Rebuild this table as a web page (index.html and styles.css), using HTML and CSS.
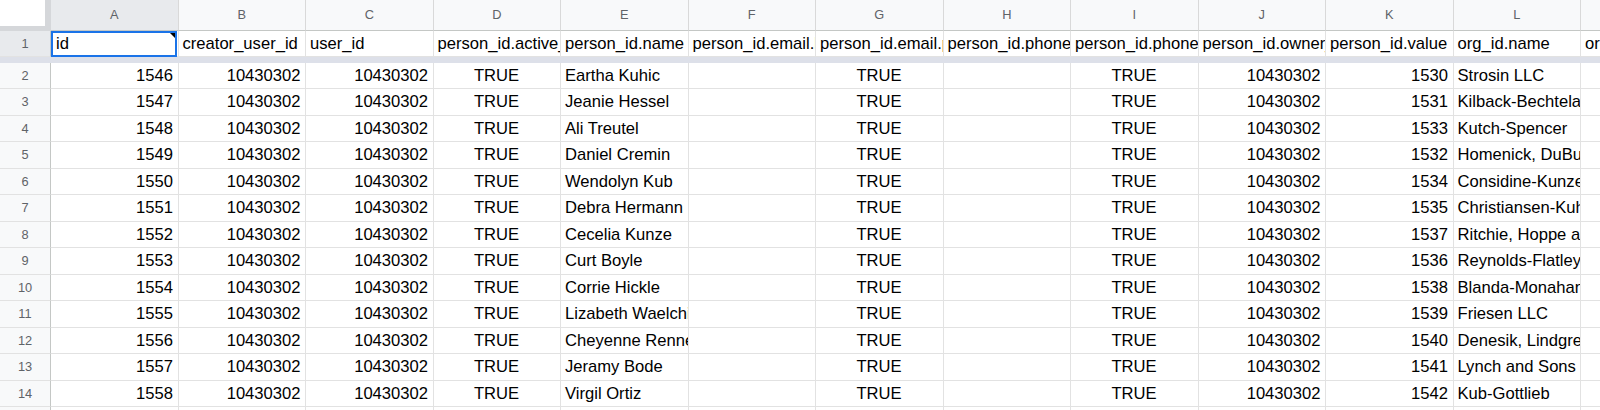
FILE: index.html
```html
<!DOCTYPE html>
<html>
<head>
<meta charset="utf-8">
<link rel="stylesheet" href="styles.css">
</head>
<body>
<div class="sheet">
  <div class="row head">
    <div class="corner"></div>
    <div class="ch sel">A</div><div class="ch">B</div><div class="ch">C</div><div class="ch">D</div><div class="ch">E</div><div class="ch">F</div><div class="ch">G</div><div class="ch">H</div><div class="ch">I</div><div class="ch">J</div><div class="ch">K</div><div class="ch">L</div><div class="ch"></div>
  </div>
  <div class="row">
    <div class="rh sel">1</div>
    <div class="c t active">id<span class="note"></span></div><div class="c t">creator_user_id</div><div class="c t">user_id</div><div class="c t">person_id.active_flag</div><div class="c t">person_id.name</div><div class="c t">person_id.email.label</div><div class="c t">person_id.email.primary</div><div class="c t">person_id.phone.label</div><div class="c t">person_id.phone.primary</div><div class="c t">person_id.owner_id</div><div class="c t">person_id.value</div><div class="c t">org_id.name</div><div class="c t">org_id.people_count</div>
  </div>
  <div class="freeze"></div>
  <div class="row">
    <div class="rh">2</div><div class="c n">1546</div><div class="c n">10430302</div><div class="c n">10430302</div><div class="c b">TRUE</div><div class="c t">Eartha Kuhic</div><div class="c"></div><div class="c b">TRUE</div><div class="c"></div><div class="c b">TRUE</div><div class="c n">10430302</div><div class="c n">1530</div><div class="c t">Strosin LLC</div><div class="c"></div>
  </div>
  <div class="row">
    <div class="rh">3</div><div class="c n">1547</div><div class="c n">10430302</div><div class="c n">10430302</div><div class="c b">TRUE</div><div class="c t">Jeanie Hessel</div><div class="c"></div><div class="c b">TRUE</div><div class="c"></div><div class="c b">TRUE</div><div class="c n">10430302</div><div class="c n">1531</div><div class="c t">Kilback-Bechtelar</div><div class="c"></div>
  </div>
  <div class="row">
    <div class="rh">4</div><div class="c n">1548</div><div class="c n">10430302</div><div class="c n">10430302</div><div class="c b">TRUE</div><div class="c t">Ali Treutel</div><div class="c"></div><div class="c b">TRUE</div><div class="c"></div><div class="c b">TRUE</div><div class="c n">10430302</div><div class="c n">1533</div><div class="c t">Kutch-Spencer</div><div class="c"></div>
  </div>
  <div class="row">
    <div class="rh">5</div><div class="c n">1549</div><div class="c n">10430302</div><div class="c n">10430302</div><div class="c b">TRUE</div><div class="c t">Daniel Cremin</div><div class="c"></div><div class="c b">TRUE</div><div class="c"></div><div class="c b">TRUE</div><div class="c n">10430302</div><div class="c n">1532</div><div class="c t">Homenick, DuBuque and Schmeler</div><div class="c"></div>
  </div>
  <div class="row">
    <div class="rh">6</div><div class="c n">1550</div><div class="c n">10430302</div><div class="c n">10430302</div><div class="c b">TRUE</div><div class="c t">Wendolyn Kub</div><div class="c"></div><div class="c b">TRUE</div><div class="c"></div><div class="c b">TRUE</div><div class="c n">10430302</div><div class="c n">1534</div><div class="c t">Considine-Kunze</div><div class="c"></div>
  </div>
  <div class="row">
    <div class="rh">7</div><div class="c n">1551</div><div class="c n">10430302</div><div class="c n">10430302</div><div class="c b">TRUE</div><div class="c t">Debra Hermann</div><div class="c"></div><div class="c b">TRUE</div><div class="c"></div><div class="c b">TRUE</div><div class="c n">10430302</div><div class="c n">1535</div><div class="c t">Christiansen-Kuhlman</div><div class="c"></div>
  </div>
  <div class="row">
    <div class="rh">8</div><div class="c n">1552</div><div class="c n">10430302</div><div class="c n">10430302</div><div class="c b">TRUE</div><div class="c t">Cecelia Kunze</div><div class="c"></div><div class="c b">TRUE</div><div class="c"></div><div class="c b">TRUE</div><div class="c n">10430302</div><div class="c n">1537</div><div class="c t">Ritchie, Hoppe and Kuhn</div><div class="c"></div>
  </div>
  <div class="row">
    <div class="rh">9</div><div class="c n">1553</div><div class="c n">10430302</div><div class="c n">10430302</div><div class="c b">TRUE</div><div class="c t">Curt Boyle</div><div class="c"></div><div class="c b">TRUE</div><div class="c"></div><div class="c b">TRUE</div><div class="c n">10430302</div><div class="c n">1536</div><div class="c t">Reynolds-Flatley</div><div class="c"></div>
  </div>
  <div class="row">
    <div class="rh">10</div><div class="c n">1554</div><div class="c n">10430302</div><div class="c n">10430302</div><div class="c b">TRUE</div><div class="c t">Corrie Hickle</div><div class="c"></div><div class="c b">TRUE</div><div class="c"></div><div class="c b">TRUE</div><div class="c n">10430302</div><div class="c n">1538</div><div class="c t">Blanda-Monahan</div><div class="c"></div>
  </div>
  <div class="row">
    <div class="rh">11</div><div class="c n">1555</div><div class="c n">10430302</div><div class="c n">10430302</div><div class="c b">TRUE</div><div class="c t">Lizabeth Waelchi</div><div class="c"></div><div class="c b">TRUE</div><div class="c"></div><div class="c b">TRUE</div><div class="c n">10430302</div><div class="c n">1539</div><div class="c t">Friesen LLC</div><div class="c"></div>
  </div>
  <div class="row">
    <div class="rh">12</div><div class="c n">1556</div><div class="c n">10430302</div><div class="c n">10430302</div><div class="c b">TRUE</div><div class="c t">Cheyenne Renner</div><div class="c"></div><div class="c b">TRUE</div><div class="c"></div><div class="c b">TRUE</div><div class="c n">10430302</div><div class="c n">1540</div><div class="c t">Denesik, Lindgren and Mraz</div><div class="c"></div>
  </div>
  <div class="row">
    <div class="rh">13</div><div class="c n">1557</div><div class="c n">10430302</div><div class="c n">10430302</div><div class="c b">TRUE</div><div class="c t">Jeramy Bode</div><div class="c"></div><div class="c b">TRUE</div><div class="c"></div><div class="c b">TRUE</div><div class="c n">10430302</div><div class="c n">1541</div><div class="c t">Lynch and Sons</div><div class="c"></div>
  </div>
  <div class="row">
    <div class="rh">14</div><div class="c n">1558</div><div class="c n">10430302</div><div class="c n">10430302</div><div class="c b">TRUE</div><div class="c t">Virgil Ortiz</div><div class="c"></div><div class="c b">TRUE</div><div class="c"></div><div class="c b">TRUE</div><div class="c n">10430302</div><div class="c n">1542</div><div class="c t">Kub-Gottlieb</div><div class="c"></div>
  </div>
  <div class="row">
    <div class="rh">15</div><div class="c"></div><div class="c"></div><div class="c"></div><div class="c"></div><div class="c"></div><div class="c"></div><div class="c"></div><div class="c"></div><div class="c"></div><div class="c"></div><div class="c"></div><div class="c"></div><div class="c"></div>
  </div>
</div>
</body>
</html>
```
FILE: styles.css
```css
html, body {
  margin: 0;
  padding: 0;
  background: #ffffff;
  overflow: hidden;
}
body {
  width: 1600px;
  height: 410px;
  font-family: "Liberation Sans", Arial, Helvetica, sans-serif;
  color: #000;
}
.sheet {
  width: 1800px;
}
.row {
  display: grid;
  grid-template-columns: 51px repeat(12, 127.5px) 200px;
  height: 26.5px;
}
.row.head {
  height: 30.5px;
}
.corner {
  background: #ffffff;
  border-right: 6px solid #d5d7da;
  border-bottom: 5px solid #d5d7da;
  box-sizing: border-box;
}
.ch {
  box-sizing: border-box;
  background: #f8f9fa;
  border-right: 1px solid #d9d9d9;
  border-bottom: 1px solid #c4c7c5;
  color: #5f6368;
  font-size: 12.8px;
  line-height: 29.5px;
  text-align: center;
}
.ch.sel, .rh.sel {
  background: #e8eaed;
}
.rh {
  box-sizing: border-box;
  background: #f8f9fa;
  border-right: 1px solid #c4c7c5;
  border-bottom: 1px solid #e2e2e2;
  color: #5f6368;
  font-size: 12.8px;
  line-height: 25.5px;
  text-align: center;
}
.c {
  box-sizing: border-box;
  position: relative;
  border-right: 1px solid #e2e2e2;
  border-bottom: 1px solid #e2e2e2;
  font-size: 16.6px;
  line-height: 25.5px;
  white-space: nowrap;
  overflow: hidden;
  padding: 0 4.5px 0 4px;
}
.n { text-align: right; }
.b { text-align: center; }
.t { text-align: left; }
.active {
  overflow: visible;
  padding-left: 5px;
}
.active::after {
  content: "";
  position: absolute;
  left: 0;
  top: 0;
  right: 1px;
  bottom: -1px;
  border: 2px solid #1a73e8;
  pointer-events: none;
}
.note {
  position: absolute;
  top: 2px;
  right: 3px;
  width: 0;
  height: 0;
  border-top: 5px solid #000;
  border-left: 5px solid transparent;
  z-index: 2;
}
.freeze {
  height: 5.8px;
  background: #dde0e9;
}
```
